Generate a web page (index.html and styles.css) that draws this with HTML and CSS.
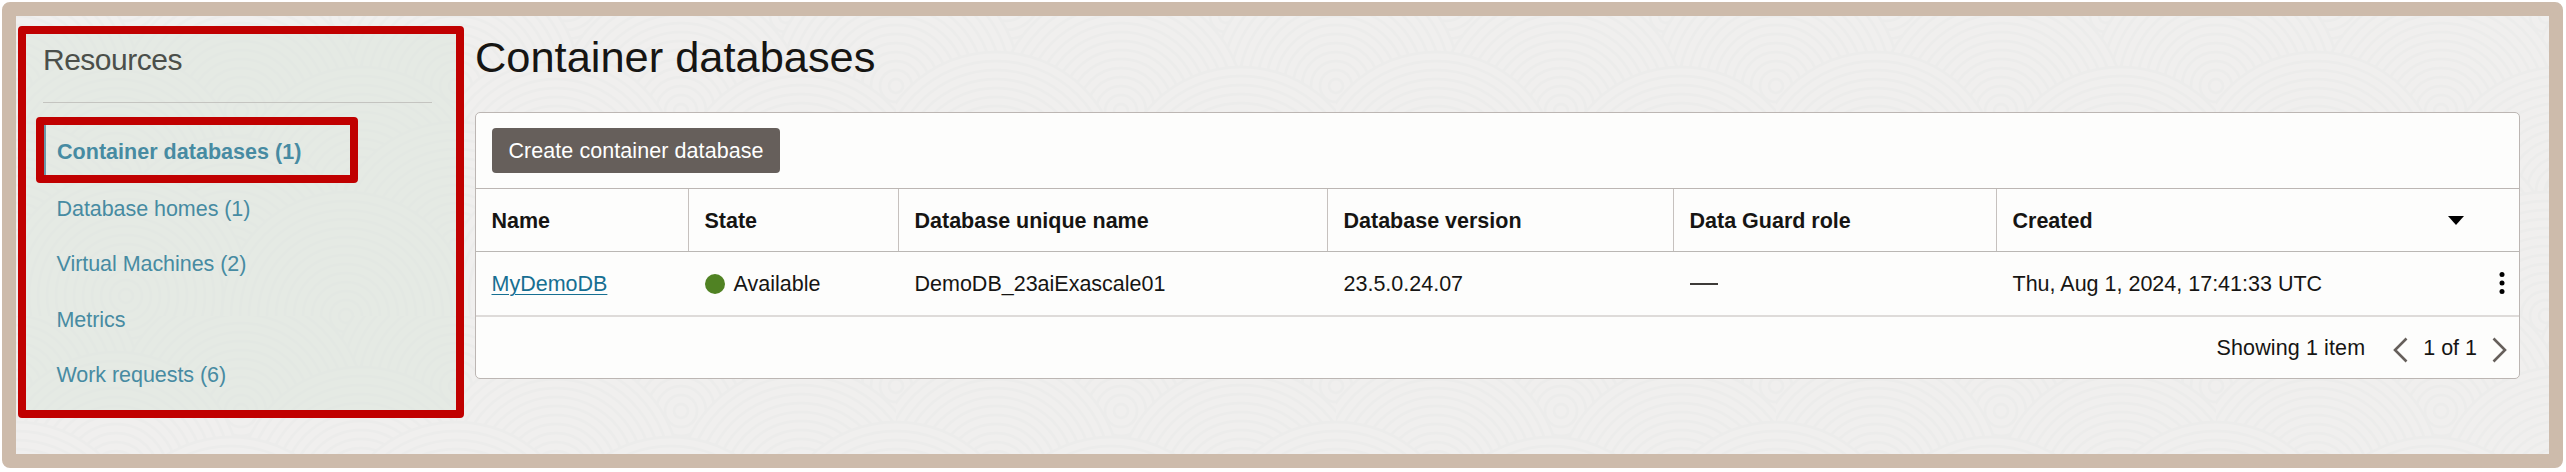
FILE: index.html
```html
<!DOCTYPE html>
<html lang="en">
<head>
<meta charset="utf-8">
<title>Container databases</title>
<link rel="stylesheet" href="styles.css">
</head>
<body>
<div class="frame">
  <svg class="texture" aria-hidden="true">
    <defs>
      <g id="rings">
        <circle r="124"/><circle r="115"/><circle r="106"/><circle r="97"/><circle r="88"/><circle r="79"/><circle r="70"/><circle r="61"/><circle r="52"/><circle r="43"/><circle r="34"/><circle r="25"/><circle r="16"/><circle r="7"/>
      </g>
      <pattern id="contours" width="440" height="300" patternUnits="userSpaceOnUse">
        <rect class="ground" width="440" height="300"/>
        <g class="lines">
          <use href="#rings" x="110" y="-20"/><use href="#rings" x="330" y="0"/>
          <use href="#rings" x="0" y="70"/><use href="#rings" x="440" y="70"/><use href="#rings" x="225" y="95"/>
          <use href="#rings" x="100" y="160"/><use href="#rings" x="345" y="175"/>
          <use href="#rings" x="0" y="230"/><use href="#rings" x="440" y="230"/><use href="#rings" x="215" y="245"/>
          <use href="#rings" x="110" y="280"/><use href="#rings" x="330" y="300"/>
        </g>
      </pattern>
    </defs>
    <rect width="100%" height="100%" fill="url(#contours)"/>
  </svg>
  <aside class="sidebar">
    <h2 class="sidebar-title">Resources</h2>
    <nav class="links">
      <a class="link active">Container databases (1)</a>
      <a class="link">Database homes (1)</a>
      <a class="link">Virtual Machines (2)</a>
      <a class="link">Metrics</a>
      <a class="link">Work requests (6)</a>
    </nav>
  </aside>
  <main class="main">
    <h1 class="title">Container databases</h1>
    <section class="card">
      <div class="toolbar"><button class="create">Create container database</button></div>
      <div class="row head">
        <div class="cell">Name</div>
        <div class="cell">State</div>
        <div class="cell">Database unique name</div>
        <div class="cell">Database version</div>
        <div class="cell">Data Guard role</div>
        <div class="cell created">Created
          <svg class="sort" width="16" height="9" viewBox="0 0 16 9"><path d="M0 0h16L8 9z"/></svg>
        </div>
      </div>
      <div class="row data">
        <div class="cell"><a class="db-link">MyDemoDB</a></div>
        <div class="cell"><span class="dot"></span>Available</div>
        <div class="cell unique">DemoDB_23aiExascale01</div>
        <div class="cell version">23.5.0.24.07</div>
        <div class="cell"><span class="dash"></span></div>
        <div class="cell date">Thu, Aug 1, 2024, 17:41:33 UTC
          <svg class="more" width="6" height="24" viewBox="0 0 6 24"><circle cx="3" cy="3.5" r="2.5"/><circle cx="3" cy="12" r="2.5"/><circle cx="3" cy="20.5" r="2.5"/></svg>
        </div>
      </div>
      <div class="footer">
        <span class="showing">Showing 1 item</span>
        <svg class="chevron" width="15" height="26" viewBox="0 0 15 26"><path d="M13.5 1.5L2 13l11.5 11.5"/></svg>
        <span class="pages">1 of 1</span>
        <svg class="chevron" width="15" height="26" viewBox="0 0 15 26"><path d="M1.5 1.5L13 13L1.5 24.5"/></svg>
      </div>
    </section>
  </main>
</div>
</body>
</html>
```
FILE: styles.css
```css
* { box-sizing: border-box; }
body {
  margin: 0;
  padding: 2px;
  background: #fff;
  color: #161513;
  font: 21.5px/26px "Liberation Sans", Arial, sans-serif;
}
.frame {
  position: relative;
  display: flex;
  gap: 11px;
  width: 2561px;
  height: 466px;
  padding: 0 0 0 2px;
  border: 14px solid #cdbbab;
  border-radius: 8px;
  background: #f0efed;
}
.texture { position: absolute; inset: 0; width: 100%; height: 100%; }
.ground { fill: #f0efee; }
.lines { fill: #f0efee; stroke: #ececeb; stroke-width: 2.5; }

.sidebar {
  position: relative;
  width: 446px;
  height: 392px;
  margin-top: 10px;
  padding: 0 24px 0 10px;
  border: 8px solid #c00000;
  border-radius: 4px;
  background: rgba(222, 230, 223, .65);
}
.sidebar-title {
  height: 69px;
  margin: 0 0 14px 7px;
  padding-top: 8px;
  border-bottom: 1px solid #c4c4c0;
  color: #4b4f4a;
  font-size: 30px;
  font-weight: 400;
  line-height: 36px;
  letter-spacing: -.5px;
  width: 389px;
}
.links { display: flex; flex-direction: column; }
.link {
  height: 55.5px;
  padding: 14px 0 0 20.5px;
  color: #478ba2;
  letter-spacing: -.05px;
}
.link.active {
  width: 322px;
  height: 66px;
  margin-bottom: -1.5px;
  padding: 14px 0 0 13px;
  border: 8px solid #c00000;
  border-radius: 4px;
  box-shadow: inset 2px 0 #6c98a8;
  font-weight: 700;
  letter-spacing: .03px;
}

.main { position: relative; width: 2045px; }
.title {
  height: 96px;
  margin: 0;
  padding-top: 16px;
  font-size: 43.4px;
  font-weight: 400;
  line-height: 50px;
}
.card {
  height: 267px;
  border: 1px solid #bcb6b3;
  border-radius: 5px;
  background: #fdfdfc;
}
.toolbar { height: 76px; padding: 15px 16px; border-bottom: 1px solid #bcb6b3; }
.create {
  display: block;
  width: 288px;
  height: 45px;
  padding: 1px 0 0;
  border: 0;
  border-radius: 4px;
  background: #665f5b;
  color: #fff;
  font: inherit;
  letter-spacing: .07px;
}
.row { display: grid; grid-template-columns: 213px 210px 429px 346px 323px 1fr; }
.head { height: 63px; border-bottom: 1px solid #bab7b4; font-weight: 700; }
.data { height: 65px; border-bottom: 2px solid #dedbd9; }
.cell { display: flex; align-items: center; padding: 1px 0 0 15.5px; white-space: nowrap; }
.head .cell { border-right: 1px solid #c6c1be; }
.head .cell:last-child { border-right: 0; }
.head .created { justify-content: space-between; padding-right: 55px; }
.db-link {
  color: #176f92;
  text-decoration: underline;
  text-decoration-thickness: 1px;
  text-underline-offset: 3px;
}
.dot { width: 20px; height: 20px; margin-right: 9px; border-radius: 50%; background: #508223; }
.dash { width: 28px; height: 2px; background: #3d3b38; }
.data .date { justify-content: space-between; padding-right: 14px; }
.more { margin-top: -2px; }
.footer { display: flex; align-items: center; justify-content: flex-end; height: 61px; padding-right: 12px; }
.showing { margin: 1px 28px 0 0; letter-spacing: .12px; }
.pages { margin: 1px 15px 0; }
.chevron { margin-top: 4px; fill: none; stroke: #665f5b; stroke-width: 2.6; }
```
